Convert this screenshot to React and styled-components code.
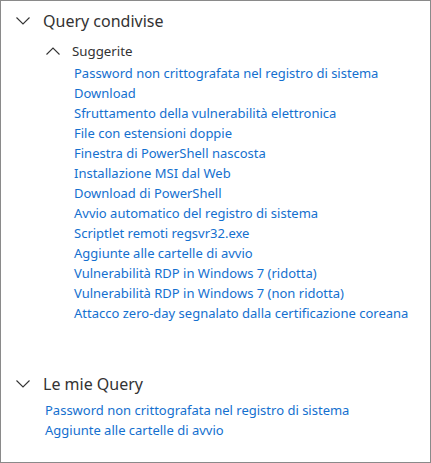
import React from 'react';
import styled, { createGlobalStyle } from 'styled-components';

const GlobalStyle = createGlobalStyle`
  html, body {
    margin: 0;
    padding: 0;
    background: #fff;
  }
  body {
    font-family: "Segoe UI", "Noto Sans", "Open Sans", sans-serif;
  }
`;

const Panel = styled.div`
  width: 431px;
  height: 463px;
  box-sizing: border-box;
  border: 1px solid #8a8a8a;
  padding: 8px 0 0 15px;
  background: #fff;
`;

const Section = styled.section`
  margin-top: ${(p) => p.gap || 0}px;
`;

const HeaderRow = styled.div`
  display: flex;
  align-items: center;
  gap: 13px;
  height: 24px;
  color: #333;
  font-size: 16px;
  cursor: pointer;
`;

const SubHeaderRow = styled(HeaderRow)`
  margin: 6px 0 0 30px;
  gap: 12px;
  font-size: 13.3px;
`;

const LinkList = styled.ul`
  list-style: none;
  margin: ${(p) => p.top || 0}px 0 0 ${(p) => p.indent}px;
  padding: 0;
`;

const LinkItem = styled.li`
  height: 20px;
  line-height: 20px;
  font-size: 13px;
  color: #1470cf;
  white-space: nowrap;
  cursor: pointer;
`;

const Chevron = ({ up }) => (
  <svg width="14" height="8" viewBox="0 0 14 8" style={{ flex: 'none' }}>
    <polyline
      points={up ? '0.5,7.5 7,1 13.5,7.5' : '0.5,0.5 7,7 13.5,0.5'}
      fill="none"
      stroke="#333"
      strokeWidth="1.1"
    />
  </svg>
);

const suggested = [
  'Password non crittografata nel registro di sistema',
  'Download',
  'Sfruttamento della vulnerabilità elettronica',
  'File con estensioni doppie',
  'Finestra di PowerShell nascosta',
  'Installazione MSI dal Web',
  'Download di PowerShell',
  'Avvio automatico del registro di sistema',
  'Scriptlet remoti regsvr32.exe',
  'Aggiunte alle cartelle di avvio',
  'Vulnerabilità RDP in Windows 7 (ridotta)',
  'Vulnerabilità RDP in Windows 7 (non ridotta)',
  'Attacco zero-day segnalato dalla certificazione coreana',
];

const mine = [
  'Password non crittografata nel registro di sistema',
  'Aggiunte alle cartelle di avvio',
];

export default function App() {
  return (
    <>
      <GlobalStyle />
      <Panel>
        <Section>
          <HeaderRow>
            <Chevron />
            Query condivise
          </HeaderRow>
          <SubHeaderRow>
            <Chevron up />
            Suggerite
          </SubHeaderRow>
          <LinkList indent={58}>
            {suggested.map((q) => (
              <LinkItem key={q}>{q}</LinkItem>
            ))}
          </LinkList>
        </Section>
        <Section gap={49}>
          <HeaderRow>
            <Chevron />
            Le mie Query
          </HeaderRow>
          <LinkList indent={29} top={4}>
            {mine.map((q) => (
              <LinkItem key={q}>{q}</LinkItem>
            ))}
          </LinkList>
        </Section>
      </Panel>
    </>
  );
}
